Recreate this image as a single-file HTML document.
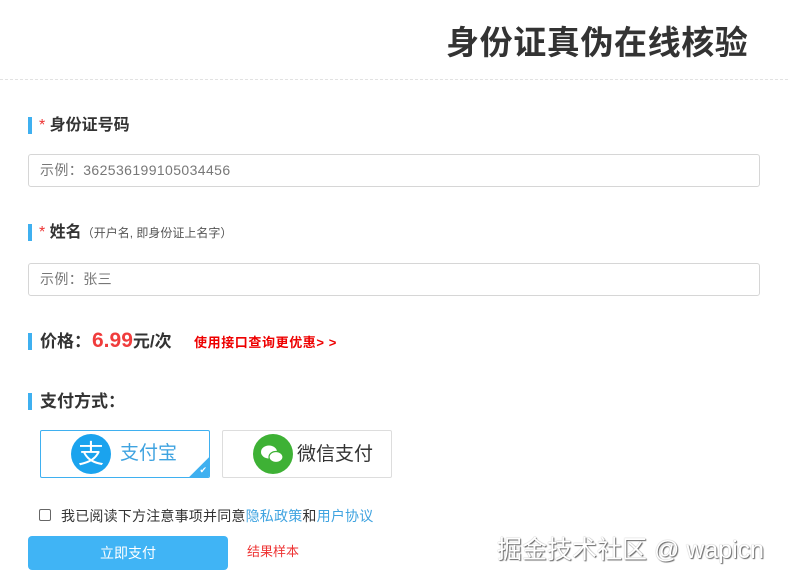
<!DOCTYPE html>
<html><head><meta charset="utf-8"><style>
*{margin:0;padding:0;box-sizing:border-box}
body{width:788px;height:584px;background:#fff;position:relative;overflow:hidden;font-family:"Liberation Sans","Noto Sans CJK SC",sans-serif;color:#333}
.a{position:absolute;white-space:nowrap}
.bar{position:absolute;left:28px;width:4px;height:17px;background:#3fb0f0}
.lab{font-size:16px;font-weight:bold;color:#333;line-height:20px}
.req{color:#e33;font-weight:normal}
.inp{position:absolute;left:28px;width:732px;height:33px;border:1px solid #d6d6d6;border-radius:3px;font-size:14px;color:#777;padding-left:11px;line-height:31px;letter-spacing:0.4px}
</style></head><body>
<div class="a" style="left:446px;top:21px;font-size:33px;font-weight:bold;color:#333;line-height:44px;letter-spacing:0.6px">身份证真伪在线核验</div>
<div class="a" style="left:0;top:79px;width:788px;border-top:1px dashed #e2e2e2"></div>

<div class="bar" style="top:117px"></div>
<div class="a lab" style="left:39px;top:116px"><span class="req">*</span> 身份证号码</div>
<div class="inp" style="top:154px">示例：362536199105034456</div>

<div class="bar" style="top:224px"></div>
<div class="a lab" style="left:39px;top:223px"><span class="req">*</span> 姓名<span style="font-size:12px;font-weight:normal;color:#555">（开户名, 即身份证上名字）</span></div>
<div class="inp" style="top:263px">示例：张三</div>

<div class="bar" style="top:333px"></div>
<div class="a lab" style="left:40px;top:332px;font-size:17px">价格：</div>
<div class="a" style="left:92px;top:327px;font-size:21px;font-weight:bold;color:#f03c3c;line-height:28px">6.99<span style="font-size:17px;color:#333">元/次</span></div>
<div class="a" style="left:194px;top:334px;font-size:13px;font-weight:bold;color:#e00;line-height:18px;letter-spacing:0.6px">使用接口查询更优惠&gt; &gt;</div>

<div class="bar" style="top:393px"></div>
<div class="a lab" style="left:40px;top:392px;font-size:17px">支付方式：</div>

<div class="a" style="left:40px;top:430px;width:170px;height:48px;border:1px solid #3fb0f0;border-radius:2px;overflow:hidden">
 <div class="a" style="left:30px;top:3px;width:40px;height:40px;border-radius:50%;background:#1aa3ee;color:#fff;font-size:26px;line-height:40px;text-align:center">支</div>
 <div class="a" style="left:79px;top:10px;font-size:19px;color:#3fa3e0;line-height:26px">支付宝</div>
 <div class="a" style="right:-14px;bottom:-14px;width:28px;height:28px;background:#3fb0f0;transform:rotate(45deg)"></div>
 <div class="a" style="right:2px;bottom:1px;color:#fff;font-size:9px">✔</div>
</div>
<div class="a" style="left:222px;top:430px;width:170px;height:48px;border:1px solid #ddd;border-radius:2px">
 <div class="a" style="left:30px;top:3px;width:40px;height:40px;border-radius:50%;background:#3eb135">
  <svg width="40" height="40" viewBox="0 0 40 40"><ellipse cx="16" cy="18" rx="8" ry="6.5" fill="#fff"/><ellipse cx="23" cy="23" rx="7" ry="5.5" fill="#fff" stroke="#3eb135" stroke-width="1.2"/></svg>
 </div>
 <div class="a" style="left:74px;top:11px;font-size:19px;color:#333;line-height:26px">微信支付</div>
</div>

<div class="a" style="left:39px;top:509px;width:12px;height:12px;border:1px solid #666;border-radius:2px"></div>
<div class="a" style="left:61px;top:507px;font-size:14px;color:#333;line-height:18px;letter-spacing:0.2px">我已阅读下方注意事项并同意<span style="color:#3fa3e0">隐私政策</span>和<span style="color:#3fa3e0">用户协议</span></div>

<div class="a" style="left:28px;top:536px;width:200px;height:34px;background:#40b4f5;border-radius:4px;color:#fff;font-size:14px;text-align:center;line-height:34px">立即支付</div>
<div class="a" style="left:247px;top:543px;font-size:13px;color:#e33;line-height:18px">结果样本</div>
<div class="a" style="left:497px;top:534px;font-size:25px;color:#fff;line-height:32px;text-shadow:1px 1px 1px #666,0 0 1px #999">掘金技术社区 @ wapicn</div>
</body></html>
